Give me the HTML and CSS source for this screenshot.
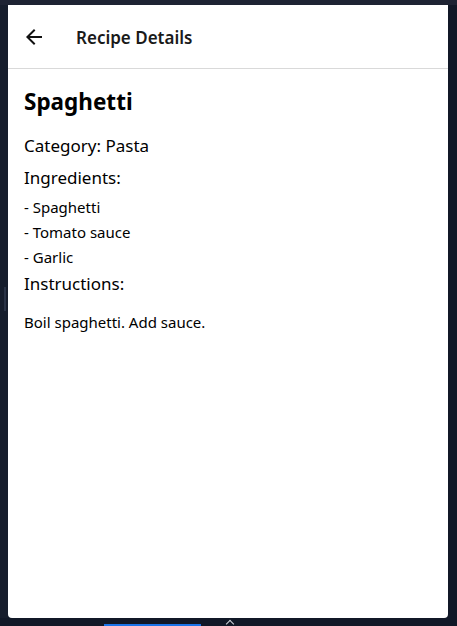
FILE: index.html
```html
<!DOCTYPE html>
<html>
<head>
<meta charset="utf-8">
<link rel="stylesheet" href="styles.css">
</head>
<body>
<div class="topstrip"></div>
<div class="frame">
  <div class="leftstrip"><div class="thumb"></div></div>
  <div class="card">
    <header class="appbar">
      <button class="back" aria-label="Back">
        <svg width="24" height="24" viewBox="0 0 24 24"><path d="M20 11H7.83l5.59-5.59L12 4l-8 8 8 8 1.41-1.41L7.83 13H20v-2z" fill="#111"/></svg>
      </button>
      <h1 class="title">Recipe Details</h1>
    </header>
    <main class="content">
      <h2 class="name">Spaghetti</h2>
      <p class="label">Category: Pasta</p>
      <p class="label">Ingredients:</p>
      <ul class="ingredients">
        <li>- Spaghetti</li>
        <li>- Tomato sauce</li>
        <li>- Garlic</li>
      </ul>
      <p class="label tight">Instructions:</p>
      <p class="instructions">Boil spaghetti. Add sauce.</p>
    </main>
  </div>
</div>
<div class="bottombar">
  <div class="bluebar"></div>
  <div class="caret"></div>
</div>
</body>
</html>
```
FILE: styles.css
```css
* { box-sizing: border-box; }
html, body {
  margin: 0;
  padding: 0;
  background: #111827;
  width: 457px;
  height: 626px;
  overflow: hidden;
  font-family: "Noto Sans", "Open Sans", sans-serif;
  color: #000;
}
.topstrip {
  height: 5px;
  background: #1e2333;
}
.frame {
  display: flex;
  height: 613px;
}
.leftstrip {
  width: 8px;
  background: #161d2c;
  padding-top: 282px;
  padding-left: 4px;
}
.thumb {
  width: 2px;
  height: 24px;
  background: #2a3346;
}
.card {
  width: 440px;
  background: #fff;
  border-radius: 0 0 4px 4px;
  display: flex;
  flex-direction: column;
}
.appbar {
  height: 64px;
  border-bottom: 1px solid #d9d9d9;
  display: flex;
  align-items: center;
  padding-left: 14px;
  gap: 30px;
}
.back {
  border: 0;
  background: none;
  padding: 0;
  width: 24px;
  height: 24px;
  display: flex;
  margin-top: 1px;
}
.title {
  margin: 1px 0 0;
  font-size: 17px;
  font-weight: 600;
  color: #1a1a1a;
}
.content {
  padding: 15px 16px;
}
.name {
  margin: 0 0 10px;
  font-size: 22.5px;
  font-weight: 700;
  line-height: 36px;
}
.label {
  margin: 0;
  font-size: 17px;
  line-height: 32px;
}
.label.tight { line-height: 26px; margin-top: 1px; }
.ingredients {
  list-style: none;
  margin: 1px 0 0;
  padding: 0;
}
.ingredients li {
  font-size: 15px;
  line-height: 25px;
}
.instructions {
  margin: 13px 0 0;
  font-size: 15px;
  line-height: 24px;
}
.bottombar {
  position: relative;
  height: 8px;
}
.bluebar {
  position: absolute;
  left: 104px;
  top: 6px;
  width: 97px;
  height: 2px;
  background: #1a73e8;
}
.caret {
  position: absolute;
  left: 227px;
  top: 3px;
  width: 6px;
  height: 6px;
  border-left: 1px solid #cfd3da;
  border-top: 1px solid #cfd3da;
  transform: rotate(45deg);
}
```
